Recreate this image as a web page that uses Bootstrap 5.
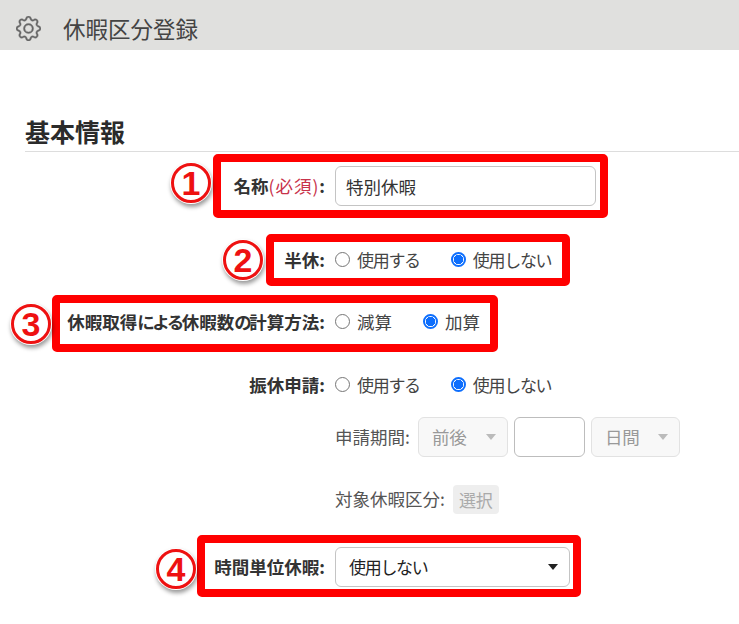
<!DOCTYPE html>
<html lang="ja">
<head>
<meta charset="utf-8">
<title>休暇区分登録</title>
<link href="https://cdn.jsdelivr.net/npm/bootstrap@5.3.0/dist/css/bootstrap.min.css" rel="stylesheet">
<style>
html,body{height:624px;overflow:hidden}
body{position:relative;background:#fff;color:#333;font-family:"Noto Sans CJK JP","Liberation Sans",sans-serif;font-size:17.5px;line-height:1.5}
.topbar{height:50px;background:#e0e0de;padding:6px 0 0 16px;gap:22px}
.topbar svg{stroke:#666;stroke-width:.25}
.topbar h1{font-size:22.5px;font-weight:400;margin:0;color:#444}
.section-head{margin:66px 0 0 25px;border-bottom:1px solid #ddd;height:36px}
.section-head h2{font-size:25px;line-height:31px;font-weight:700;margin:0;color:#2b2b2b}
.frow{display:flex;align-items:center}
.flabel{width:325px;flex:none;text-align:right;font-weight:700;font-size:17.5px;color:#333;margin-right:10px}
.flabel .req{color:#c8324a;font-weight:400;letter-spacing:1px}
.kn{letter-spacing:-2.5px}
.kn-r{font-size:17px;letter-spacing:-1.3px}
.r-name{margin-top:14px;height:40px}
.r-half{margin-top:41px;height:26px}
.r-calc{margin-top:36px;height:26px}
.r-sub{margin-top:37px;height:26px}
.r-period{margin-top:19px;height:40px}
.r-target{margin-top:27px;height:30px}
.r-time{margin-top:33px;height:40px}
.form-control.fc-name{width:261px;height:40px;font-size:17.5px;padding:0 10px;border-color:#c4c4c4;color:#333;border-radius:6px}
.radio-item{display:flex;align-items:center;margin:0 31px 0 0;color:#444}
.form-check-input.rd{width:15px;height:15px;margin:0 7px 2px 0;border-color:#767676;flex:none}
.form-check-input.rd:checked{background:radial-gradient(circle,#0d6efd 0 4.5px,#fff 5px);border:2px solid #0d6efd}
.period-label{color:#555;font-size:17.5px}
.sel{height:40px;font-size:17.5px;border-radius:6px;border-color:#c4c4c4;padding:0 13px;color:#333;background-size:10px 6px;background-position:right 11px center;
background-image:url("data:image/svg+xml,%3csvg xmlns='http://www.w3.org/2000/svg' viewBox='0 0 10 6'%3e%3cpath d='M0 0h10L5 6z' fill='%23222'/%3e%3c/svg%3e")}
.sel:disabled{background-color:#f8f8f8;border-color:#e2e2e2;color:#999;opacity:1;background-image:url("data:image/svg+xml,%3csvg xmlns='http://www.w3.org/2000/svg' viewBox='0 0 10 6'%3e%3cpath d='M0 0h10L5 6z' fill='%23bbb'/%3e%3c/svg%3e")}
.sel-a{width:90px}
.sel-b{width:89px}
.num{width:71px;height:40px;margin:0 6px;border-color:#bdbdbd;border-radius:6px}
.sel-time{width:235px;color:#222;font-size:17px;letter-spacing:-1.3px}
.btn.pick{font-size:17px;padding:0 6px;height:29px;line-height:29px;background:#eee;border:0;color:#aaa;border-radius:4px;opacity:1;font-family:inherit}
.mk{position:absolute;border:8px solid #f00;border-radius:5px;pointer-events:none}
.mk1{left:213px;top:154px;width:395px;height:64px}
.mk2{left:266px;top:234px;width:304px;height:52px}
.mk3{left:52px;top:295px;width:446px;height:57px}
.mk4{left:197px;top:535px;width:384px;height:62px}
.pin{position:absolute;width:40px;height:40px;border-radius:50%;background:#fff;border:3px solid #ee1111;box-shadow:0 0 0 1px #fff,1px 3px 4px 1px rgba(0,0,0,.4);color:#ee1111;font:700 34px/34px "Liberation Sans",sans-serif;text-align:center}
.p1{left:171px;top:163px}
.p2{left:223px;top:240px}
.p3{left:11px;top:304px}
.p4{left:156px;top:549px}
</style>
</head>
<body>
<header class="topbar d-flex align-items-center">
  <svg width="25" height="25" viewBox="0 0 16 16" fill="#666" aria-hidden="true">
    <path d="M8 4.754a3.246 3.246 0 1 0 0 6.492 3.246 3.246 0 0 0 0-6.492zM5.754 8a2.246 2.246 0 1 1 4.492 0 2.246 2.246 0 0 1-4.492 0z"/>
    <path d="M9.796 1.343c-.527-1.79-3.065-1.79-3.592 0l-.094.319a.873.873 0 0 1-1.255.52l-.292-.16c-1.64-.892-3.433.902-2.54 2.541l.159.292a.873.873 0 0 1-.52 1.255l-.319.094c-1.79.527-1.79 3.065 0 3.592l.319.094a.873.873 0 0 1 .52 1.255l-.16.292c-.892 1.64.901 3.434 2.541 2.54l.292-.159a.873.873 0 0 1 1.255.52l.094.319c.527 1.79 3.065 1.79 3.592 0l.094-.319a.873.873 0 0 1 1.255-.52l.292.16c1.64.893 3.434-.902 2.54-2.541l-.159-.292a.873.873 0 0 1 .52-1.255l.319-.094c1.79-.527 1.79-3.065 0-3.592l-.319-.094a.873.873 0 0 1-.52-1.255l.16-.292c.893-1.64-.902-3.433-2.541-2.54l-.292.159a.873.873 0 0 1-1.255-.52l-.094-.319zm-2.633.283c.246-.835 1.428-.835 1.674 0l.094.319a1.873 1.873 0 0 0 2.693 1.115l.291-.16c.764-.415 1.6.42 1.184 1.185l-.159.292a1.873 1.873 0 0 0 1.116 2.692l.318.094c.835.246.835 1.428 0 1.674l-.319.094a1.873 1.873 0 0 0-1.115 2.693l.16.291c.415.764-.42 1.6-1.185 1.184l-.291-.159a1.873 1.873 0 0 0-2.693 1.116l-.094.318c-.246.835-1.428.835-1.674 0l-.094-.319a1.873 1.873 0 0 0-2.692-1.115l-.292.16c-.764.415-1.6-.42-1.184-1.185l.159-.291A1.873 1.873 0 0 0 1.945 8.93l-.319-.094c-.835-.246-.835-1.428 0-1.674l.319-.094A1.873 1.873 0 0 0 3.06 4.377l-.16-.292c-.415-.764.42-1.6 1.185-1.184l.292.159a1.873 1.873 0 0 0 2.692-1.115l.094-.319z"/>
  </svg>
  <h1>休暇区分登録</h1>
</header>

<div class="section-head"><h2>基本情報</h2></div>

<form>
  <div class="frow r-name">
    <label class="flabel">名称<span class="req">(必須)</span>:</label>
    <input type="text" class="form-control fc-name" value="特別休暇">
  </div>
  <div class="frow r-half">
    <span class="flabel">半休:</span>
    <label class="radio-item"><input class="form-check-input rd" type="radio" name="a"><span class="kn-r">使用する</span></label>
    <label class="radio-item"><input class="form-check-input rd" type="radio" name="a" checked><span class="kn-r">使用しない</span></label>
  </div>
  <div class="frow r-calc">
    <span class="flabel">休暇取得<span class="kn">による</span>休暇数<span class="kn">の</span>計算方法:</span>
    <label class="radio-item"><input class="form-check-input rd" type="radio" name="b">減算</label>
    <label class="radio-item"><input class="form-check-input rd" type="radio" name="b" checked>加算</label>
  </div>
  <div class="frow r-sub">
    <span class="flabel">振休申請:</span>
    <label class="radio-item"><input class="form-check-input rd" type="radio" name="c"><span class="kn-r">使用する</span></label>
    <label class="radio-item"><input class="form-check-input rd" type="radio" name="c" checked><span class="kn-r">使用しない</span></label>
  </div>
  <div class="frow r-period">
    <span class="flabel"></span>
    <span class="period-label">申請期間:</span>
    <select class="form-select sel sel-a ms-2" disabled><option>前後</option></select>
    <input type="text" class="form-control num">
    <select class="form-select sel sel-b" disabled><option>日間</option></select>
  </div>
  <div class="frow r-target">
    <span class="flabel"></span>
    <span class="period-label">対象休暇区分:</span>
    <button type="button" class="btn pick ms-2" disabled>選択</button>
  </div>
  <div class="frow r-time">
    <span class="flabel">時間単位休暇:</span>
    <select class="form-select sel sel-time"><option>使用しない</option></select>
  </div>
</form>

<div class="mk mk1"></div><div class="mk mk2"></div><div class="mk mk3"></div><div class="mk mk4"></div>
<div class="pin p1">1</div><div class="pin p2">2</div><div class="pin p3">3</div><div class="pin p4">4</div>
<script src="https://cdn.jsdelivr.net/npm/bootstrap@5.3.0/dist/js/bootstrap.bundle.min.js"></script>
</body>
</html>
